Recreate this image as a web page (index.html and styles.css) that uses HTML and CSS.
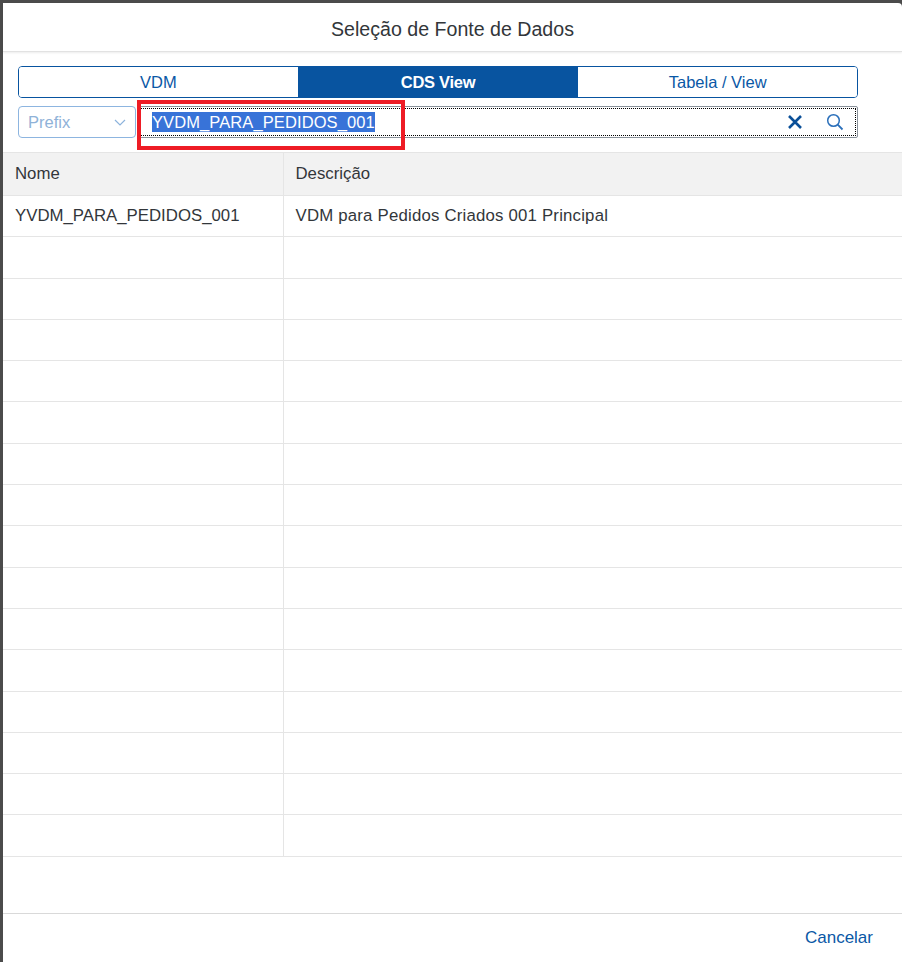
FILE: index.html
```html
<!DOCTYPE html>
<html lang="pt">
<head>
    <meta charset="UTF-8">
    <title>Seleção de Fonte de Dados</title>
    <link rel="stylesheet" href="styles.css">
</head>
<body>
    <div class="dialog">
        <div class="header">Seleção de Fonte de Dados</div>

        <div class="content">
            <div class="segmented">
                <button class="segment">VDM</button>
                <button class="segment selected">CDS View</button>
                <button class="segment">Tabela / View</button>
            </div>

            <div class="search-row">
                <div class="prefix">
                    <span>Prefix</span>
                    <svg width="14" height="14" viewBox="0 0 14 14"><path d="M2 5 L7 10 L12 5" fill="none" stroke="#8db3dc" stroke-width="1.2"/></svg>
                </div>
                <div class="search">
                    <div class="search-inner">
                        <span class="value"><span class="selection">YVDM_PARA_PEDIDOS_001</span></span>
                        <svg class="clear" width="16" height="16" viewBox="0 0 16 16"><path d="M2 2 L14 14 M14 2 L2 14" stroke="#0a4f98" stroke-width="2.6"/></svg>
                        <svg class="magnifier" width="18" height="18" viewBox="0 0 18 18"><circle cx="7.5" cy="7.5" r="5.8" fill="none" stroke="#2a6fba" stroke-width="1.5"/><path d="M11.7 11.7 L16.5 16.5" stroke="#2a6fba" stroke-width="1.8"/></svg>
                    </div>
                </div>
                <div class="highlight"></div>
            </div>
        </div>

        <table class="grid">
            <thead>
                <tr><th class="col-name">Nome</th><th>Descrição</th></tr>
            </thead>
            <tbody id="rows">
                <tr><td>YVDM_PARA_PEDIDOS_001</td><td>VDM para Pedidos Criados 001 Principal</td></tr>
            </tbody>
        </table>

        <div class="spacer"></div>

        <div class="footer">
            <button class="link">Cancelar</button>
        </div>
    </div>

    <script>
        // Empty rows to fill the list
        const rows = document.getElementById('rows');
        for (let i = 0; i < 15; i++) {
            const tr = document.createElement('tr');
            tr.innerHTML = '<td></td><td></td>';
            rows.appendChild(tr);
        }
    </script>
</body>
</html>
```

FILE: styles.css
```css
* {
    margin: 0;
    padding: 0;
    box-sizing: border-box;
}

body {
    background: #4b4b4b;
    font-family: "Liberation Sans", Arial, sans-serif;
    color: #32363a;
    height: 962px;
    overflow: hidden;
    padding: 3px 0 0 3px;
}

.dialog {
    background: white;
    height: 959px;
    border-top-right-radius: 4px;
    display: flex;
    flex-direction: column;
}

.header {
    height: 49px;
    display: flex;
    align-items: center;
    justify-content: center;
    padding-top: 5px;
    font-size: 19.6px;
    color: #32363a;
    border-bottom: 1px solid #e2e2e2;
    box-shadow: 0 1px 2px rgba(0, 0, 0, 0.08);
}

.content {
    padding: 14px 0 0 15px;
}

.segmented {
    display: flex;
    width: 840px;
    height: 32px;
    border: 1px solid #0854a0;
    border-radius: 4px;
    overflow: hidden;
}

.segment {
    flex: 1;
    background: white;
    border: none;
    border-right: 1px solid #0854a0;
    font-family: inherit;
    font-size: 16.5px;
    color: #0a58a6;
}

.segment:last-child {
    border-right: none;
}

.segment.selected {
    background: #0854a0;
    color: white;
    font-weight: bold;
    letter-spacing: -0.3px;
}

.search-row {
    position: relative;
    display: flex;
    gap: 2px;
    margin-top: 8px;
    height: 32px;
}

.prefix {
    width: 118px;
    border: 1px solid #8db5e0;
    border-radius: 4px;
    display: flex;
    align-items: center;
    justify-content: space-between;
    padding: 0 8px 0 9px;
    font-size: 16.5px;
    color: #8fb2d8;
}

.search {
    width: 720px;
    border: 1px solid #89919a;
    border-radius: 2px;
    padding: 1px;
}

.search-inner {
    height: 100%;
    border: 1px dotted #000;
    display: flex;
    align-items: center;
    padding-left: 11px;
}

.value {
    flex: 1;
    font-size: 16.5px;
    letter-spacing: 0.1px;
}

.selection {
    background: #3873d8;
    color: white;
    padding: 1px 0;
}

.clear {
    margin-right: 23px;
}

.magnifier {
    margin-right: 11px;
}

.highlight {
    position: absolute;
    left: 119px;
    top: -6px;
    width: 268px;
    height: 50px;
    border: 4px solid #ee1c25;
}

.grid {
    margin-top: 14px;
    width: 100%;
    border-collapse: collapse;
    font-size: 16.8px;
}

.grid th {
    background: #f2f2f2;
    font-weight: normal;
    text-align: left;
    height: 43px;
    padding: 0 12px;
    border-top: 1px solid #e5e5e5;
    border-bottom: 1px solid #e5e5e5;
    color: #32363a;
}

.grid td {
    height: 41.3px;
    padding: 0 12px;
    border-bottom: 1px solid #e5e5e5;
}

.grid td:last-child {
    letter-spacing: 0.2px;
}

.grid .col-name {
    width: 280px;
}

.grid th:first-child,
.grid td:first-child {
    border-right: 1px solid #e5e5e5;
}

.spacer {
    flex: 1;
}

.footer {
    height: 49px;
    border-top: 1px solid #d9d9d9;
    display: flex;
    align-items: center;
    justify-content: flex-end;
    padding-right: 29px;
}

.link {
    background: none;
    border: none;
    font-family: inherit;
    font-size: 17px;
    color: #0a58a6;
}
```
